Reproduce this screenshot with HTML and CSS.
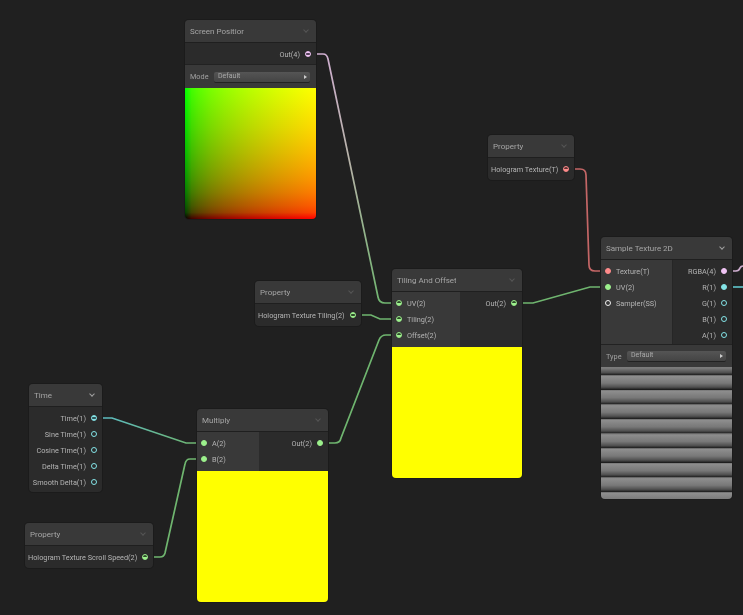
FILE: index.html
```html
<!DOCTYPE html>
<html lang="en">
<head>
  <meta charset="UTF-8" />
  <title>Shader Graph</title>
  <link rel="stylesheet" href="styles.css">
</head>
<body>
  <div class="canvas">
    <svg class="wires" width="743" height="615" viewBox="0 0 743 615">
      <defs>
        <linearGradient id="wirePinkGreen" gradientUnits="userSpaceOnUse" x1="316" y1="54" x2="392" y2="303">
          <stop offset="0" stop-color="#cfaed0" />
          <stop offset="0.45" stop-color="#b5b3a6" />
          <stop offset="1" stop-color="#6fb56f" />
        </linearGradient>
        <linearGradient id="wireTealGreen" gradientUnits="userSpaceOnUse" x1="102" y1="418" x2="197" y2="443">
          <stop offset="0" stop-color="#5cbcc2" />
          <stop offset="1" stop-color="#6fb56f" />
        </linearGradient>
      </defs>
      <path class="wire" stroke="url(#wirePinkGreen)" d="M316 54H323Q327 54 328 59L378 297Q379 303 385 303H392" />
      <path class="wire wireGreen" d="M361 315H371L380 319H392" />
      <path class="wire wireGreen" d="M328 443H335Q340 443 341 438L379 340Q381 335 386 335H392" />
      <path class="wire wireGreen" d="M522 303H533L590 287H601" />
      <path class="wire wireRed" d="M574 169H580Q586 169 586 175L589 265Q589 271 595 271H601" />
      <path class="wire wirePink" d="M732 271H736Q739 271 740 268Q741 266 743 266" />
      <path class="wire wireTeal" d="M732 287H743" />
      <path class="wire" stroke="url(#wireTealGreen)" d="M102 418H112L186 443H197" />
      <path class="wire wireGreen" d="M153 557H160Q164 557 165 553L185 464Q186 459 190 459H197" />
    </svg>

    <div class="node screenPos">
      <div class="nodeTitle"><span class="titleText">Screen Position</span><span class="chevron dim"></span></div>
      <div class="outputRow"><div class="port right"><span>Out(4)</span><i class="dot pink on"></i></div></div>
      <div class="controlRow"><label>Mode</label><div class="dropdown">Default</div></div>
      <div class="preview uvPreview"></div>
    </div>

    <div class="node propTexture">
      <div class="nodeTitle"><span class="titleText">Property</span><span class="chevron dim"></span></div>
      <div class="propRow"><span>Hologram Texture(T)</span><i class="dot red half"></i></div>
    </div>

    <div class="node propTiling">
      <div class="nodeTitle"><span class="titleText">Property</span><span class="chevron dim"></span></div>
      <div class="propRow"><span>Hologram Texture Tiling(2)</span><i class="dot green on"></i></div>
    </div>

    <div class="node tiling">
      <div class="nodeTitle"><span class="titleText">Tiling And Offset</span><span class="chevron dim"></span></div>
      <div class="ports">
        <div class="inputs">
          <div class="port"><i class="dot green half"></i><span>UV(2)</span></div>
          <div class="port"><i class="dot green half"></i><span>Tiling(2)</span></div>
          <div class="port"><i class="dot green half"></i><span>Offset(2)</span></div>
        </div>
        <div class="outputs">
          <div class="port right"><span>Out(2)</span><i class="dot green half"></i></div>
        </div>
      </div>
      <div class="preview yellow"></div>
    </div>

    <div class="node sample">
      <div class="nodeTitle"><span class="titleText">Sample Texture 2D</span><span class="chevron"></span></div>
      <div class="ports">
        <div class="inputs">
          <div class="port"><i class="dot red solid"></i><span>Texture(T)</span></div>
          <div class="port"><i class="dot green solid"></i><span>UV(2)</span></div>
          <div class="port"><i class="dot white"></i><span>Sampler(SS)</span></div>
        </div>
        <div class="outputs">
          <div class="port right"><span>RGBA(4)</span><i class="dot pink solid"></i></div>
          <div class="port right"><span>R(1)</span><i class="dot teal solid"></i></div>
          <div class="port right"><span>G(1)</span><i class="dot teal"></i></div>
          <div class="port right"><span>B(1)</span><i class="dot teal"></i></div>
          <div class="port right"><span>A(1)</span><i class="dot teal"></i></div>
        </div>
      </div>
      <div class="controlRow"><label>Type</label><div class="dropdown">Default</div></div>
      <div class="preview stripes"></div>
    </div>

    <div class="node time">
      <div class="nodeTitle"><span class="titleText">Time</span><span class="chevron"></span></div>
      <div class="timeRows">
        <div class="port right"><span>Time(1)</span><i class="dot teal on"></i></div>
        <div class="port right"><span>Sine Time(1)</span><i class="dot teal"></i></div>
        <div class="port right"><span>Cosine Time(1)</span><i class="dot teal"></i></div>
        <div class="port right"><span>Delta Time(1)</span><i class="dot teal"></i></div>
        <div class="port right"><span>Smooth Delta(1)</span><i class="dot teal"></i></div>
      </div>
    </div>

    <div class="node multiply">
      <div class="nodeTitle"><span class="titleText">Multiply</span><span class="chevron dim"></span></div>
      <div class="ports">
        <div class="inputs">
          <div class="port"><i class="dot green solid"></i><span>A(2)</span></div>
          <div class="port"><i class="dot green solid"></i><span>B(2)</span></div>
        </div>
        <div class="outputs">
          <div class="port right"><span>Out(2)</span><i class="dot green solid"></i></div>
        </div>
      </div>
      <div class="preview yellow"></div>
    </div>

    <div class="node propScroll">
      <div class="nodeTitle"><span class="titleText">Property</span><span class="chevron dim"></span></div>
      <div class="propRow"><span>Hologram Texture Scroll Speed(2)</span><i class="dot green half"></i></div>
    </div>
  </div>
</body>
</html>
```

FILE: styles.css
```css
* {
  box-sizing: border-box;
}

body {
  margin: 0;
  background-color: #202020;
  font-family: Roboto, "Liberation Sans", sans-serif;
  font-size: 7.3px;
  color: #b4b4b4;
}

.canvas {
  position: relative;
  width: 743px;
  height: 615px;
  overflow: hidden;
}

.wires {
  position: absolute;
  left: 0;
  top: 0;
}

.wire {
  fill: none;
  stroke-width: 1.7;
}

.wireGreen { stroke: #6fb56f; }
.wireRed { stroke: #c46666; }
.wirePink { stroke: #cfaed0; }
.wireTeal { stroke: #5cbcc2; }

/* nodes sit on a free canvas */
.node {
  position: absolute;
  display: flex;
  flex-direction: column;
  background-color: #2b2b2b;
  border-radius: 4px;
  box-shadow: 0 0 0 1px #1b1b1b;
  overflow: hidden;
}

.screenPos { left: 185px; top: 20px; width: 131px; height: 199px; }
.propTexture { left: 488px; top: 135px; width: 86px; height: 45px; }
.propTiling { left: 255px; top: 281px; width: 106px; height: 45px; }
.tiling { left: 392px; top: 269px; width: 130px; height: 209px; }
.sample { left: 601px; top: 237px; width: 131px; height: 262px; }
.time { left: 29px; top: 384px; width: 73px; height: 108px; }
.multiply { left: 197px; top: 409px; width: 131px; height: 193px; }
.propScroll { left: 25px; top: 523px; width: 128px; height: 45px; }

.nodeTitle {
  flex: none;
  display: flex;
  align-items: center;
  justify-content: space-between;
  height: 23px;
  padding: 0 5px;
  background-color: #393939;
  border-bottom: 1px solid #1f1f1f;
  font-size: 8px;
  color: #a6a6a6;
}

.titleText {
  overflow: hidden;
  white-space: nowrap;
  max-width: 100px;
}

.screenPos .titleText { max-width: 54px; }
.tiling .titleText { max-width: 59px; }

.port span, .propRow span, .titleText, .controlRow label, .dropdown {
  filter: blur(0.25px);
}

.chevron {
  width: 4px;
  height: 4px;
  margin: -2px 3px 0 0;
  border-right: 1px solid #a0a0a0;
  border-bottom: 1px solid #a0a0a0;
  transform: rotate(45deg);
}

.chevron.dim {
  border-color: #565656;
}

.ports {
  flex: none;
  display: flex;
}

.tiling .ports { height: 55px; }
.sample .ports { height: 85px; }
.multiply .ports { height: 39px; }

.inputs {
  display: flex;
  flex-direction: column;
  padding-top: 3px;
  background-color: #393939;
}

.tiling .inputs { width: 68px; }
.sample .inputs { width: 72px; border-right: 1px solid #262626; }
.multiply .inputs { width: 62px; }

.outputs {
  flex: 1;
  display: flex;
  flex-direction: column;
  padding-top: 3px;
  background-color: #2b2b2b;
}

.sample .ports {
  border-bottom: 1px solid #222222;
}

.port {
  display: flex;
  align-items: center;
  gap: 5px;
  height: 16px;
  padding-left: 4px;
  white-space: nowrap;
}

.port.right {
  justify-content: flex-end;
  padding: 0 5px 0 0;
}

.outputRow {
  flex: none;
  height: 22px;
  padding-top: 3px;
  border-bottom: 1px solid #222222;
}

.timeRows {
  padding-top: 3px;
}

.propRow {
  display: flex;
  align-items: center;
  justify-content: space-between;
  height: 22px;
  padding: 0 5px 0 3px;
  white-space: nowrap;
}

.dot {
  flex: none;
  display: block;
  width: 6px;
  height: 6px;
  border-radius: 50%;
  border: 1px solid #ffffff;
}

.dot.green { border-color: #9cf08c; }
.dot.red { border-color: #ff8b8b; }
.dot.pink { border-color: #f0c4f4; }
.dot.teal { border-color: #84e4e7; }
.dot.white { border-color: #f0f0f0; }

.dot.solid.green { background-color: #9cf08c; }
.dot.solid.red { background-color: #ff8b8b; }
.dot.solid.pink { background-color: #f0c4f4; }
.dot.solid.teal { background-color: #84e4e7; }

.dot.on.green { background: linear-gradient(#9cf08c 30%, #2e4a2a 30%, #2e4a2a 70%, #9cf08c 70%); }
.dot.on.pink { background: linear-gradient(#f0c4f4 30%, #55405a 30%, #55405a 70%, #f0c4f4 70%); }
.dot.on.teal { background: linear-gradient(#84e4e7 30%, #2f5356 30%, #2f5356 70%, #84e4e7 70%); }

.dot.half.green { background: linear-gradient(#2e4a2a 40%, #9cf08c 40%); }
.dot.half.red { background: linear-gradient(#5a3030 40%, #ff8b8b 40%); }

.controlRow {
  flex: none;
  display: flex;
  align-items: center;
  height: 22px;
  padding: 0 6px 0 5px;
  background-color: #393939;
  color: #a0a0a0;
}

.screenPos .controlRow { height: 23px; }
.screenPos .controlRow label { width: 24px; }
.sample .controlRow label { width: 21px; }

.dropdown {
  flex: 1;
  position: relative;
  height: 10px;
  line-height: 9px;
  padding-left: 4px;
  border-radius: 2px;
  background: linear-gradient(#555555, #444444);
  box-shadow: 0 1px 0 #222222;
  font-size: 7px;
  color: #a8a8a8;
}

.dropdown::after {
  content: "";
  position: absolute;
  right: 3px;
  top: 3px;
  border-left: 3px solid #cccccc;
  border-top: 2px solid transparent;
  border-bottom: 2px solid transparent;
}

.preview {
  flex: 1;
}

.yellow {
  background-color: #ffff00;
}

.uvPreview {
  background-image:
    linear-gradient(to top, #000000 0%, #004100 5%, #005900 10%, #007b00 20%, #009400 30%, #00a800 40%, #00ba00 50%, #00ca00 60%, #00d900 70%, #00e600 80%, #00f300 90%, #00ff00 100%),
    linear-gradient(to right, #000000 0%, #410000 5%, #590000 10%, #7b0000 20%, #940000 30%, #a80000 40%, #ba0000 50%, #ca0000 60%, #d90000 70%, #e60000 80%, #f30000 90%, #ff0000 100%);
  background-blend-mode: screen;
}

.stripes {
  background-image: repeating-linear-gradient(to bottom,
    #5f5f5f -6.6px,
    #8e8e8e -5.2px,
    #787878 1.5px,
    #505050 5.5px,
    #1c1c1c 8px);
}
```
